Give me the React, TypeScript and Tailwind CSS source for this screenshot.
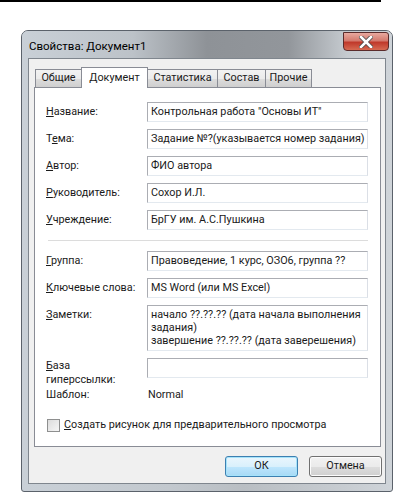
import React from "react";

const font = { fontFamily: 'Roboto, "Liberation Sans", sans-serif' };

function Field({ label, value, tall }: { label: React.ReactNode; value: React.ReactNode; tall?: boolean }) {
  return (
    <div className="flex items-start">
      <div className="w-[101px] h-[20px] flex items-center shrink-0 whitespace-nowrap">{label}</div>
      <div
        className={
          "w-[221px] border border-[#abadb3] border-b-[#e3e9ef] border-r-[#dbdfe6] bg-white pl-[3px] whitespace-nowrap overflow-hidden " +
          (tall ? "h-[46px] pt-[2px] leading-[13px]" : "h-[20px] flex items-center")
        }
      >
        {value}
      </div>
    </div>
  );
}

function Tab({ label, w, active }: { label: string; w: string; active?: boolean }) {
  if (active) {
    return (
      <div className={w + " h-[21px] -mb-[1px] -ml-[1px] bg-white border border-[#898c95] border-b-0 flex justify-center pt-[2px] relative z-10"}>
        {label}
      </div>
    );
  }
  return (
    <div className={w + " h-[18px] border border-[#898c95] border-b-0 -ml-[1px] first:ml-0 bg-[linear-gradient(to_bottom,#f2f2f2_0%,#ebebeb_50%,#dddddd_51%,#cfcfcf_100%)] flex items-center justify-center"}>
      {label}
    </div>
  );
}

export default function App() {
  return (
    <div className="w-[397px] h-[493px] bg-white text-[10.8px] text-[#1a1a1a]" style={font}>
      {/* top rule from the page */}
      <div className="w-[381px] h-[2px] bg-black" />

      {/* dialog window */}
      <div className="ml-[21px] mt-[28px] w-[372px] h-[462px] rounded-t-[7px] rounded-b-[3px] border border-[#5b626b] flex flex-col bg-[linear-gradient(to_right,#c9d0d7_0%,#c2c8ce_40%,#b9bec3_60%,#c6cbd0_85%,#cfd4d9_100%)] overflow-hidden">
        {/* title bar */}
        <div className="h-[27px] flex items-start justify-between pl-[7px] pr-[3px] bg-[linear-gradient(to_right,#c9d0d7_0%,#bcc2c8_30%,#8e9297_50%,#92969b_72%,#c6cbd0_88%,#cfd4d9_100%)]">
          <div className="pt-[7px] text-[11.5px] text-black">Свойства: Документ1</div>
          <div className="mt-[1px] w-[46px] h-[19px] rounded-b-[4px] rounded-tr-[3px] border border-[#5a2b2b] bg-[linear-gradient(to_bottom,#e8a99f_0%,#d47a6e_45%,#c0392b_55%,#d66a52_100%)] flex items-center justify-center">
            <svg width="14" height="12" viewBox="0 0 14 12">
              <path d="M2 1 L12 11 M12 1 L2 11" stroke="#4a4a4a" strokeWidth="4.2" strokeLinecap="square" />
              <path d="M2 1 L12 11 M12 1 L2 11" stroke="#ffffff" strokeWidth="2.6" strokeLinecap="square" />
            </svg>
          </div>
        </div>

        {/* client area */}
        <div className="mx-[6px] mb-[7px] flex-1 border border-[#7f868e] bg-[#f0f0f0] flex flex-col">
          {/* tabs */}
          <div className="flex items-end pl-[6px] pt-[8px]">
            <Tab label="Общие" w="w-[47px]" />
            <Tab label="Документ" w="w-[67px]" active />
            <Tab label="Статистика" w="w-[71px]" />
            <Tab label="Состав" w="w-[49px]" />
            <Tab label="Прочие" w="w-[47px]" />
          </div>

          {/* tab panel */}
          <div className="ml-[5px] mr-[4px] h-[360px] bg-white border border-[#898c95] pl-[11px] pt-[14px] flex flex-col">
            <div className="flex flex-col gap-[7px]">
              <Field label={<span><u>Н</u>азвание:</span>} value={'Контрольная работа "Основы ИТ"'} />
              <Field label={<span>Т<u>е</u>ма:</span>} value="Задание №?(указывается номер задания)" />
              <Field label={<span><u>А</u>втор:</span>} value="ФИО автора" />
              <Field label={<span><u>Р</u>уководитель:</span>} value="Сохор И.Л." />
              <Field label={<span><u>У</u>чреждение:</span>} value="БрГУ им. А.С.Пушкина" />
            </div>

            <div className="ml-[2px] w-[320px] h-[1px] bg-[#dcdcdc] mt-[10px] mb-[10px]" />

            <div className="flex flex-col gap-[7px]">
              <Field label={<span><u>Г</u>руппа:</span>} value="Правоведение, 1 курс, ОЗО6, группа ??" />
              <Field label={<span><u>К</u>лючевые слова:</span>} value="MS Word (или MS Excel)" />
              <Field
                label={<span><u>З</u>аметки:</span>}
                tall
                value={
                  <span>
                    начало ??.??.?? (дата начала выполнения
                    <br />
                    задания)
                    <br />
                    завершение ??.??.?? (дата заверешения)
                  </span>
                }
              />
              <div className="flex items-start">
                <div className="w-[101px] leading-[14px] pt-[1px]">
                  <u>Б</u>аза
                  <br />
                  гиперссылки:
                </div>
                <div className="w-[221px] h-[20px] border border-[#abadb3] border-b-[#e3e9ef] border-r-[#dbdfe6] bg-white" />
              </div>
            </div>

            <div className="flex items-center h-[14px] mt-[1px]">
              <div className="w-[101px]">Шаблон:</div>
              <div className="pl-[1px]">Normal</div>
            </div>

            <div className="flex items-center mt-[15px] pl-[1px] whitespace-nowrap">
              <div className="w-[13px] h-[13px] border border-[#8e8f8f] bg-[linear-gradient(135deg,#dcdcdc_0%,#f6f6f6_100%)] mr-[4px]" />
              <span><u>С</u>оздать рисунок для предварительного просмотра</span>
            </div>
          </div>

          {/* buttons */}
          <div className="flex justify-end gap-[11px] pr-[3px] pt-[9px]">
            <div className="w-[73px] h-[21px] rounded-[3px] border border-[#3c7fb1] shadow-[inset_0_0_0_1px_#a6e3fa] bg-[linear-gradient(to_bottom,#eaf6fd_0%,#d9f0fc_50%,#bee6fd_51%,#a7d9f5_100%)] flex items-center justify-center">
              ОК
            </div>
            <div className="w-[73px] h-[21px] rounded-[3px] border border-[#707070] shadow-[inset_0_0_0_1px_#fcfcfc] bg-[linear-gradient(to_bottom,#f2f2f2_0%,#ebebeb_50%,#dddddd_51%,#cfcfcf_100%)] flex items-center justify-center">
              Отмена
            </div>
          </div>
        </div>
      </div>
    </div>
  );
}
